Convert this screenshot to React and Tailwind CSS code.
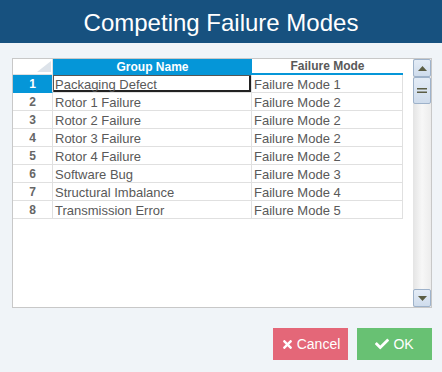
import React from "react";
import { FaTimes, FaCheck } from "react-icons/fa";

const rows = [
  ["Packaging Defect", "Failure Mode 1"],
  ["Rotor 1 Failure", "Failure Mode 2"],
  ["Rotor 2 Failure", "Failure Mode 2"],
  ["Rotor 3 Failure", "Failure Mode 2"],
  ["Rotor 4 Failure", "Failure Mode 2"],
  ["Software Bug", "Failure Mode 3"],
  ["Structural Imbalance", "Failure Mode 4"],
  ["Transmission Error", "Failure Mode 5"],
];

const font = { fontFamily: '"Liberation Sans", Arial, sans-serif' };

function ScrollBtn({ children, h = "h-[18px]" }) {
  return (
    <div
      className={`${h} w-[18px] box-border border border-[#9eb2ca] rounded-[2px] bg-gradient-to-b from-[#e4ecf6] to-[#cfdcec] flex items-center justify-center`}
    >
      {children}
    </div>
  );
}

export default function App() {
  return (
    <div className="w-[442px] h-[372px] bg-[#f0f4f8] flex flex-col" style={font}>
      <div className="h-[43px] bg-[#17517f] text-white text-[24px] flex items-center justify-center leading-none pt-[2px]">
        Competing Failure Modes
      </div>
      <div className="mt-[15px] ml-[12px] w-[420px] h-[250px] box-border border border-[#c8c8c8] bg-white flex">
        <div className="flex-1 flex flex-col">
          <div className="flex h-[16px] text-[12px] font-bold leading-none">
            <div className="w-[40px] h-[16px] box-border border-r border-b border-[#e0e0e0] relative">
              <svg className="absolute right-[1px] bottom-[2px]" width="14" height="11" viewBox="0 0 14 11">
                <polygon points="14,0 14,11 0,11" fill="#dde3ea" />
              </svg>
            </div>
            <div className="w-[199px] h-[16px] bg-[#0596d8] text-white flex items-center justify-center">
              Group Name
            </div>
            <div className="w-[151px] h-[16px] box-border border-b-2 border-[#0596d8] text-[#595959] flex items-center justify-center pb-[1px]">
              Failure Mode
            </div>
          </div>
          {rows.map(([g, f], i) => {
            const first = i === 0;
            return (
              <div key={i} className="flex h-[18px] text-[13px] leading-none">
                <div
                  className={`w-[40px] h-[18px] box-border border-r border-b border-[#e0e0e0] flex items-center justify-center text-[12px] font-bold pt-[1px] ${
                    first ? "bg-[#0596d8] text-white border-b-[#0596d8]" : "text-[#666]"
                  }`}
                >
                  {i + 1}
                </div>
                <div
                  className={`w-[199px] h-[18px] box-border border-r border-b border-[#e0e0e0] flex items-center pl-[2px] pt-[1px] text-[#595959] ${
                    first ? "shadow-[inset_1px_1px_0_#555,inset_-2px_-2px_0_#222]" : ""
                  }`}
                >
                  {g}
                </div>
                <div className="w-[151px] h-[18px] box-border border-r border-b border-[#e0e0e0] flex items-center pl-[2px] pt-[1px] text-[#595959]">
                  {f}
                </div>
              </div>
            );
          })}
        </div>
        <div className="w-[18px] h-full flex flex-col bg-gradient-to-r from-[#e4e4e4] via-[#f7f7f7] to-[#ececec]">
          <ScrollBtn>
            <svg width="9" height="5" viewBox="0 0 9 5">
              <polygon points="4.5,0 9,5 0,5" fill="#5b5d44" />
            </svg>
          </ScrollBtn>
          <ScrollBtn h="h-[27px]">
            <svg width="10" height="5" viewBox="0 0 10 5">
              <rect x="0" y="0" width="10" height="1.5" fill="#5b5d44" />
              <rect x="0" y="3.5" width="10" height="1.5" fill="#5b5d44" />
            </svg>
          </ScrollBtn>
          <div className="flex-1" />
          <ScrollBtn>
            <svg width="9" height="5" viewBox="0 0 9 5">
              <polygon points="0,0 9,0 4.5,5" fill="#5b5d44" />
            </svg>
          </ScrollBtn>
        </div>
      </div>
      <div className="mt-[20px] flex justify-end gap-[9px] pr-[10px]">
        <button className="w-[75px] h-[32px] bg-[#e46778] text-white text-[14px] flex items-center justify-center gap-[3px]">
          <FaTimes className="w-[13px] h-[13px]" />
          <span>Cancel</span>
        </button>
        <button className="w-[75px] h-[32px] bg-[#68c173] text-white text-[14px] flex items-center justify-center gap-[4px]">
          <FaCheck className="w-[14px] h-[14px]" />
          <span>OK</span>
        </button>
      </div>
    </div>
  );
}
